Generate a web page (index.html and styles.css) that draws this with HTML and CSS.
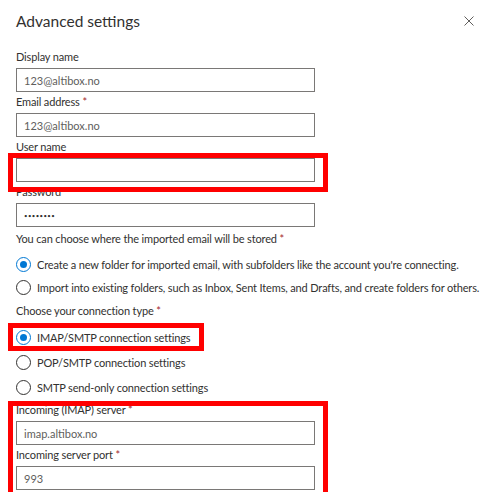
FILE: index.html
```html
<!DOCTYPE html>
<html lang="en">
<head>
<meta charset="utf-8">
<title>Advanced settings</title>
<link rel="stylesheet" href="styles.css">
</head>
<body>
<div class="panel">
  <header class="header">
    <h1 class="title">Advanced settings</h1>
    <button class="close" aria-label="Close">
      <svg width="10" height="10" viewBox="0 0 10 10"><path d="M0.5 0.5 L9.5 9.5 M9.5 0.5 L0.5 9.5" stroke="#605e5c" stroke-width="1" fill="none"/></svg>
    </button>
  </header>
  <div class="form">
    <div class="field">
      <label class="label">Display name</label>
      <input class="input" type="text" value="123@altibox.no" readonly>
    </div>
    <div class="field">
      <label class="label">Email address <span class="req">*</span></label>
      <input class="input" type="text" value="123@altibox.no" readonly>
    </div>
    <div class="field">
      <label class="label">User name</label>
      <input class="input" type="text" value="" readonly>
    </div>
    <div class="field">
      <label class="label">Password <span class="req">*</span></label>
      <input class="input pw" type="password" value="12345678" readonly>
    </div>
    <div class="text-line">You can choose where the imported email will be stored <span class="req">*</span></div>
    <div class="radio-group group-a">
      <div class="radio-row"><span class="radio checked"></span><span>Create a new folder for imported email, with subfolders like the account you're connecting.</span></div>
      <div class="radio-row"><span class="radio"></span><span>Import into existing folders, such as Inbox, Sent Items, and Drafts, and create folders for others.</span></div>
    </div>
    <div class="text-line">Choose your connection type <span class="req">*</span></div>
    <div class="radio-group group-b">
      <div class="radio-row"><span class="radio checked"></span><span>IMAP/SMTP connection settings</span></div>
      <div class="radio-row"><span class="radio"></span><span>POP/SMTP connection settings</span></div>
      <div class="radio-row"><span class="radio"></span><span>SMTP send-only connection settings</span></div>
    </div>
    <div class="field">
      <label class="label">Incoming (IMAP) server <span class="req">*</span></label>
      <input class="input" type="text" value="imap.altibox.no" readonly>
    </div>
    <div class="field">
      <label class="label">Incoming server port <span class="req">*</span></label>
      <input class="input" type="text" value="993" readonly>
    </div>
  </div>
</div>
<div class="mark mark-user"></div>
<div class="mark mark-imap"></div>
<div class="mark mark-server"></div>
</body>
</html>
```
FILE: styles.css
```css
html, body {
  margin: 0;
  padding: 0;
  background: #ffffff;
  overflow: hidden;
}
body {
  font-family: Lato, "Noto Sans", sans-serif;
  color: #323130;
  font-size: 11px;
  letter-spacing: -0.15px;
  width: 490px;
  height: 492px;
  position: relative;
}
.panel {
  padding: 0 16px;
}
.header {
  height: 42px;
  display: flex;
  align-items: center;
  justify-content: space-between;
}
.title {
  margin: 0;
  font-size: 15.5px;
  font-weight: 400;
  letter-spacing: 0;
  color: #323130;
}
.close {
  border: 0;
  background: none;
  padding: 0;
  width: 10px;
  height: 10px;
  display: flex;
}
.form {
  margin-top: 5px;
  display: flex;
  flex-direction: column;
}
.field {
  display: flex;
  flex-direction: column;
  height: 45px;
}
.label {
  line-height: 20px;
  height: 20px;
  margin-bottom: 1px;
  color: #323130;
}
.req {
  color: #a4262c;
}
.input {
  box-sizing: border-box;
  width: 299px;
  height: 24px;
  border: 1px solid #7a7876;
  border-radius: 0;
  padding: 0 7px;
  font-family: inherit;
  font-size: 11px;
  letter-spacing: 0;
  color: #605e5c;
  outline: none;
  margin: 0;
  background: #fff;
}
.input.pw {
  font-size: 6px;
  letter-spacing: 0.4px;
  color: #323130;
}
.text-line {
  line-height: 20px;
  height: 20px;
  margin-top: 2px;
}
.radio-group {
  display: flex;
  flex-direction: column;
}
.group-a {
  margin-top: 4px;
}
.group-a .radio-row {
  height: 23px;
}
.group-b {
  margin-top: 4px;
}
.group-b .radio-row {
  height: 25px;
}
.radio-row {
  display: flex;
  align-items: center;
  gap: 6px;
  white-space: nowrap;
}
.radio {
  box-sizing: border-box;
  width: 15px;
  height: 15px;
  border: 1px solid #323130;
  border-radius: 50%;
  flex: none;
  display: flex;
  align-items: center;
  justify-content: center;
}
.radio.checked {
  border-color: #0078d4;
}
.radio.checked::after {
  content: "";
  width: 7px;
  height: 7px;
  border-radius: 50%;
  background: #0078d4;
}
.mark {
  position: absolute;
  border: 5px solid #ff0000;
  box-sizing: border-box;
  pointer-events: none;
}
.mark-user {
  left: 8px;
  top: 153px;
  width: 320px;
  height: 39px;
}
.mark-imap {
  left: 8px;
  top: 323px;
  width: 196px;
  height: 28px;
}
.mark-server {
  left: 8px;
  top: 401px;
  width: 320px;
  height: 96px;
}
```
